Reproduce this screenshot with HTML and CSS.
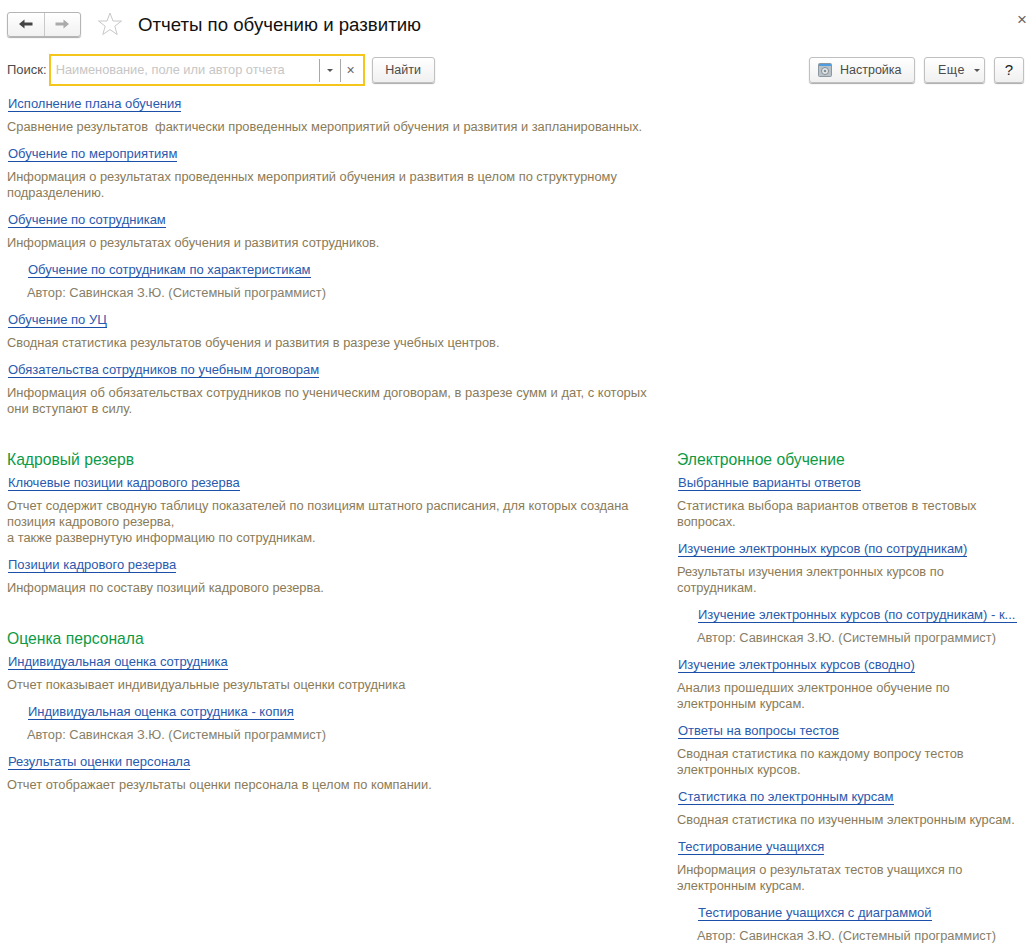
FILE: index.html
```html
<!DOCTYPE html>
<html lang="ru">
<head>
    <meta charset="UTF-8">
    <title>Отчеты по обучению и развитию</title>
    <link rel="stylesheet" href="styles.css">
</head>
<body>
    <div class="page">
        <div class="header">
            <div class="nav">
                <button class="nav-btn">
                    <svg width="16" height="12" viewBox="0 0 16 12"><path d="M1 6 6.500 1.500V4.500H14.500V7.500H6.500V10.500Z" fill="#444"/></svg>
                </button>
                <button class="nav-btn">
                    <svg width="16" height="12" viewBox="0 0 16 12"><path d="M15 6 9.500 1.500V4.500H1.500V7.500H9.500V10.500Z" fill="#aaa"/></svg>
                </button>
            </div>
            <svg class="star" width="26" height="26" viewBox="0 0 26 26"><path d="M13 2 16 10H24.500L17.800 15.200 20.200 23.500 13 18.600 5.800 23.500 8.200 15.200 1.500 10H10Z" fill="#fff" stroke="#c8c8c8"/></svg>
            <h1 class="title">Отчеты по обучению и развитию</h1>
            <span class="close">×</span>
        </div>

        <div class="toolbar">
            <label class="search-label">Поиск:</label>
            <div class="search">
                <span class="search-text">Наименование, поле или автор отчета</span>
                <span class="search-btn"><i class="caret"></i></span>
                <span class="search-btn search-clear">×</span>
            </div>
            <button class="btn btn-find">Найти</button>
            <div class="spacer"></div>
            <button class="btn btn-settings">
                <svg width="14" height="14" viewBox="0 0 14 14"><rect x="0.500" y="0.500" width="13" height="13" rx="1" fill="#b9c2c9" stroke="#8d979f"/><rect x="1" y="1" width="12" height="2" fill="#4f9ce0"/><circle cx="7" cy="8" r="3.500" fill="#e6e9eb" stroke="#858d94"/><circle cx="7" cy="8" r="1.300" fill="#858d94"/></svg>
                Настройка
            </button>
            <button class="btn btn-more">Еще <i class="caret"></i></button>
            <button class="btn btn-help">?</button>
        </div>

        <div class="top-list">
            <div class="item">
                <a class="link" href="#">Исполнение плана обучения</a>
                <p class="desc">Сравнение результатов&nbsp; фактически проведенных мероприятий обучения и развития и запланированных.</p>
            </div>
            <div class="item">
                <a class="link" href="#">Обучение по мероприятиям</a>
                <p class="desc">Информация о результатах проведенных мероприятий обучения и развития в целом по структурному<br>подразделению.</p>
            </div>
            <div class="item">
                <a class="link" href="#">Обучение по сотрудникам</a>
                <p class="desc">Информация о результатах обучения и развития сотрудников.</p>
            </div>
            <div class="item sub">
                <a class="link" href="#">Обучение по сотрудникам по характеристикам</a>
                <p class="desc">Автор: Савинская З.Ю. (Системный программист)</p>
            </div>
            <div class="item">
                <a class="link" href="#">Обучение по УЦ</a>
                <p class="desc">Сводная статистика результатов обучения и развития в разрезе учебных центров.</p>
            </div>
            <div class="item">
                <a class="link" href="#">Обязательства сотрудников по учебным договорам</a>
                <p class="desc desc-wide">Информация об обязательствах сотрудников по ученическим договорам, в разрезе сумм и дат, с которых<br>они вступают в силу.</p>
            </div>
        </div>

        <div class="columns">
            <div class="col-left">
                <div class="group">
                    <h2 class="group-title">Кадровый резерв</h2>
                    <div class="item">
                        <a class="link" href="#">Ключевые позиции кадрового резерва</a>
                        <p class="desc">Отчет содержит сводную таблицу показателей по позициям штатного расписания, для которых создана<br>позиция кадрового резерва,<br>а также развернутую информацию по сотрудникам.</p>
                    </div>
                    <div class="item">
                        <a class="link" href="#">Позиции кадрового резерва</a>
                        <p class="desc">Информация по составу позиций кадрового резерва.</p>
                    </div>
                </div>
                <div class="group">
                    <h2 class="group-title">Оценка персонала</h2>
                    <div class="item">
                        <a class="link" href="#">Индивидуальная оценка сотрудника</a>
                        <p class="desc">Отчет показывает индивидуальные результаты оценки сотрудника</p>
                    </div>
                    <div class="item sub">
                        <a class="link" href="#">Индивидуальная оценка сотрудника - копия</a>
                        <p class="desc">Автор: Савинская З.Ю. (Системный программист)</p>
                    </div>
                    <div class="item">
                        <a class="link" href="#">Результаты оценки персонала</a>
                        <p class="desc">Отчет отображает результаты оценки персонала в целом по компании.</p>
                    </div>
                </div>
            </div>
            <div class="col-right">
                <div class="group">
                    <h2 class="group-title">Электронное обучение</h2>
                    <div class="item">
                        <a class="link" href="#">Выбранные варианты ответов</a>
                        <p class="desc">Статистика выбора вариантов ответов в тестовых<br>вопросах.</p>
                    </div>
                    <div class="item">
                        <a class="link" href="#">Изучение электронных курсов (по сотрудникам)</a>
                        <p class="desc">Результаты изучения электронных курсов по<br>сотрудникам.</p>
                    </div>
                    <div class="item sub">
                        <a class="link link-cut" href="#">Изучение электронных курсов (по сотрудникам) - к...</a>
                        <p class="desc">Автор: Савинская З.Ю. (Системный программист)</p>
                    </div>
                    <div class="item">
                        <a class="link" href="#">Изучение электронных курсов (сводно)</a>
                        <p class="desc">Анализ прошедших электронное обучение по<br>электронным курсам.</p>
                    </div>
                    <div class="item">
                        <a class="link" href="#">Ответы на вопросы тестов</a>
                        <p class="desc">Сводная статистика по каждому вопросу тестов<br>электронных курсов.</p>
                    </div>
                    <div class="item">
                        <a class="link" href="#">Статистика по электронным курсам</a>
                        <p class="desc">Сводная статистика по изученным электронным курсам.</p>
                    </div>
                    <div class="item">
                        <a class="link" href="#">Тестирование учащихся</a>
                        <p class="desc">Информация о результатах тестов учащихся по<br>электронным курсам.</p>
                    </div>
                    <div class="item sub">
                        <a class="link" href="#">Тестирование учащихся с диаграммой</a>
                        <p class="desc">Автор: Савинская З.Ю. (Системный программист)</p>
                    </div>
                </div>
            </div>
        </div>
    </div>
</body>
</html>
```

FILE: styles.css
```css
* {
    box-sizing: border-box;
}
html, body {
    height: 100%;
}
body {
    margin: 0;
    background: #fff;
    font-family: "Liberation Sans", Arial, sans-serif;
    font-size: 13px;
    line-height: 16px;
    color: #4b4b4b;
    overflow: hidden;
}
.page {
    padding: 11px 7px 0;
}

/* header */
.header {
    display: flex;
    align-items: center;
    height: 26px;
    position: relative;
}
.nav {
    display: flex;
    width: 74px;
    height: 25px;
    border: 1px solid #b5b5b5;
    border-radius: 3px;
    background: linear-gradient(#fff, #f1f1f1);
    box-shadow: 0 1px 1px #aaa;
}
.nav-btn {
    flex: 1;
    border: 0;
    padding: 0;
    background: none;
    display: flex;
    align-items: center;
    justify-content: center;
}
.nav-btn + .nav-btn {
    border-left: 1px solid #c9c9c9;
}
.star {
    margin-left: 16px;
}
.title {
    margin: 2px 0 0 15px;
    font-size: 18.65px;
    font-weight: normal;
    color: #111;
}
.close {
    position: absolute;
    right: -3px;
    top: 1px;
    font-size: 17px;
    color: #666;
}

/* toolbar */
.toolbar {
    display: flex;
    align-items: center;
    height: 32px;
    margin-top: 17px;
}
.search-label {
    margin-right: 2px;
}
.search {
    display: flex;
    align-items: center;
    width: 316px;
    height: 32px;
    border: 2px solid #f6c51c;
    padding-left: 5px;
}
.search-text {
    flex: 1;
    color: #c6c6c6;
    font-size: 12.8px;
}
.search-btn {
    width: 21px;
    height: 23px;
    border-left: 1px solid #a8a8a8;
    display: flex;
    align-items: center;
    justify-content: center;
    color: #666;
}
.search-clear {
    width: 23px;
    padding-right: 2px;
    font-size: 14px;
}
.caret {
    display: inline-block;
    width: 0;
    height: 0;
    border-left: 3px solid transparent;
    border-right: 3px solid transparent;
    border-top: 3px solid #555;
}
.btn {
    height: 26px;
    border: 1px solid #c0c0c0;
    border-radius: 3px;
    background: linear-gradient(#fff, #f0f0f0);
    box-shadow: 0 1px 1px #aaa;
    font: inherit;
    font-size: 12.5px;
    color: #4b4b4b;
    display: flex;
    align-items: center;
    justify-content: center;
    padding: 0;
}
.btn-find {
    width: 63px;
    margin-left: 7px;
}
.spacer {
    flex: 1;
}
.btn-settings {
    width: 106px;
    gap: 8px;
    justify-content: flex-start;
    padding-left: 8px;
}
.btn-more {
    width: 61px;
    margin-left: 9px;
    gap: 9px;
    justify-content: flex-start;
    padding-left: 13px;
    letter-spacing: 0.5px;
}
.btn-help {
    width: 30px;
    margin-left: 9px;
    font-size: 15px;
    color: #222;
}

/* report lists */
.top-list {
    width: 650px;
    margin-top: 9px;
}
.item {
    margin-bottom: 10px;
}
.link {
    display: inline-block;
    margin-left: 1px;
    padding-top: 1px;
    color: #2a5aae;
    text-decoration: none;
    border-bottom: 1px solid #1c4fa8;
    line-height: 15px;
    vertical-align: top;
}
.desc {
    margin: 7px 0 0;
    color: #8a7b58;
    font-size: 12.85px;
}
.desc-wide {
    font-size: 13px;
}
.sub {
    padding-left: 20px;
}
.sub .desc {
    color: #85806a;
}
.link-cut {
    display: block;
    width: 319px;
    white-space: nowrap;
}

/* groups */
.columns {
    display: flex;
    margin-top: 33px;
}
.col-left {
    width: 670px;
    padding-right: 20px;
}
.col-right {
    width: 347px;
}
.group {
    margin-bottom: 33px;
}
.group-title {
    margin: 0 0 4px;
    font-size: 15.7px;
    line-height: 20px;
    font-weight: normal;
    color: #0c9a45;
}
```
